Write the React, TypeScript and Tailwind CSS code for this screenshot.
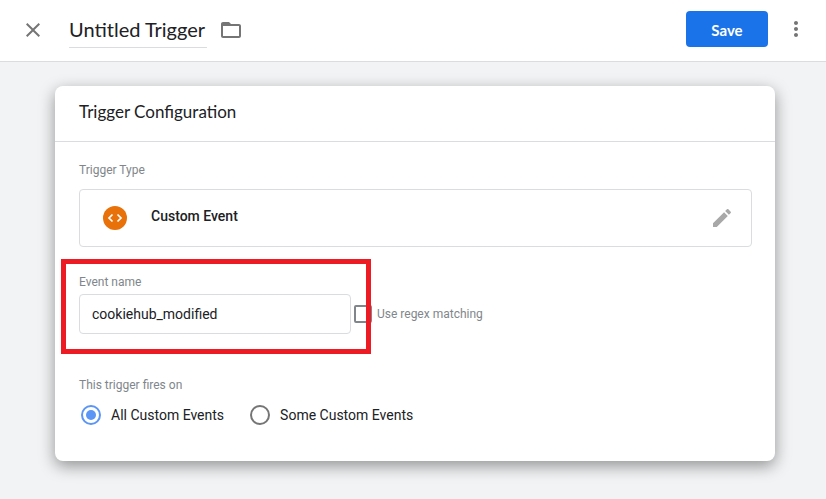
import { useState } from "react";

const FIRE_OPTIONS = [
  { value: "all", label: "All Custom Events" },
  { value: "some", label: "Some Custom Events" },
];

function Header() {
  const [name, setName] = useState("Untitled Trigger");

  return (
    <header className="flex items-center justify-between h-[62px] pb-[2px] pl-[21px] pr-[18px] bg-white border-b border-[#dadce0]">
      <div className="flex items-center">
        <button type="button" aria-label="Close" className="text-[#757575]">
          <svg width="24" height="24" viewBox="0 0 24 24" fill="currentColor">
            <path d="M19 6.4L17.6 5 12 10.6 6.4 5 5 6.4 10.6 12 5 17.6 6.400 19 12 13.4 17.6 19 19 17.6 13.4 12z" />
          </svg>
        </button>
        <input
          type="text"
          aria-label="Trigger name"
          value={name}
          onChange={(e) => setName(e.target.value)}
          className="ml-6 mt-1 w-[138px] h-8 pb-1 border-b border-[#dadce0] outline-none text-xl text-[#202124] font-['Lato',sans-serif]"
        />
        <button type="button" aria-label="Move to folder" className="ml-3 text-[#757575]">
          <svg width="24" height="24" viewBox="0 0 24 24" fill="currentColor">
            <path d="M20 6h-8l-2-2H4c-1.1 0-2 .9-2 2v12c0 1.1.9 2 2 2h16c1.1 0 2-.9 2-2V8c0-1.1-.9-2-2-2zm0 12H4V8h16v10z" />
          </svg>
        </button>
      </div>
      <div className="flex items-center gap-4 pb-[2px]">
        <button
          type="button"
          className="w-[82px] h-9 pt-[2px] rounded bg-[#1a73e8] text-white text-[15px] leading-5 font-bold font-['Lato',sans-serif]"
        >
          Save
        </button>
        <button type="button" aria-label="More actions" className="text-[#757575]">
          <svg width="24" height="24" viewBox="0 0 24 24" fill="currentColor">
            <path d="M12 8c1.1 0 2-.9 2-2s-.9-2-2-2-2 .9-2 2 .9 2 2 2zm0 2c-1.1 0-2 .9-2 2s.9 2 2 2 2-.9 2-2-.9-2-2-2zm0 6c-1.1 0-2 .9-2 2s.9 2 2 2 2-.9 2-2-.9-2-2-2z" />
          </svg>
        </button>
      </div>
    </header>
  );
}

function TriggerType() {
  return (
    <section>
      <h3 className="text-xs text-[#80868b]">Trigger Type</h3>
      <div className="mt-[11px] flex items-center h-[58px] px-[23px] pr-[17px] border border-[#dadce0] rounded">
        <svg width="24" height="24" viewBox="0 0 24 24">
          <circle cx="12" cy="12" r="12" fill="#e8710a" />
          <path d="M9.500 8.500L6 12l3.500 3.500M14.500 8.500L18 12l-3.500 3.500" fill="none" stroke="#fff" strokeWidth="1.700" />
        </svg>
        <span className="ml-6 mb-1 text-sm font-medium text-[#202124]">Custom Event</span>
        <button type="button" aria-label="Edit trigger type" className="ml-auto text-[#a8a8a8]">
          <svg width="24" height="24" viewBox="0 0 24 24" fill="currentColor">
            <path d="M3 17.250V21h3.750L17.810 9.940l-3.750-3.750L3 17.250zM20.710 7.040c.39-.39.39-1.020 0-1.410l-2.340-2.340c-.39-.39-1.020-.39-1.410 0l-1.830 1.830 3.750 3.750 1.830-1.830z" />
          </svg>
        </button>
      </div>
    </section>
  );
}

function EventName() {
  const [eventName, setEventName] = useState("cookiehub_modified");
  const [regex, setRegex] = useState(false);

  return (
    <section className="relative mt-[27px]">
      <label htmlFor="event-name" className="block text-xs text-[#80868b]">
        Event name
      </label>
      <div className="mt-1 flex items-center">
        <input
          id="event-name"
          type="text"
          value={eventName}
          onChange={(e) => setEventName(e.target.value)}
          className="w-[272px] h-10 px-3 border border-[#dadce0] rounded outline-none text-sm text-[#202124]"
        />
        <label className="ml-[3px] flex items-center gap-[5px] text-xs text-[#80868b]">
          <input
            type="checkbox"
            checked={regex}
            onChange={(e) => setRegex(e.target.checked)}
            className="appearance-none w-[18px] h-[18px] border-2 border-[#80868b] rounded-xs checked:bg-[#1a73e8]"
          />
          Use regex matching
        </label>
      </div>
      {/* highlight around the event name field */}
      <div className="pointer-events-none absolute -left-[18px] -top-[15px] w-[310px] h-[95px] border-5 border-[#ed1c24]" />
    </section>
  );
}

function FiresOn() {
  const [firesOn, setFiresOn] = useState("all");

  return (
    <fieldset className="mt-[43px]">
      <legend className="text-xs text-[#80868b]">This trigger fires on</legend>
      <div className="mt-3 pl-[2px] flex gap-[26px]">
        {FIRE_OPTIONS.map((option) => (
          <label key={option.value} className="flex items-center gap-[10px] text-sm text-[#202124]">
            <input
              type="radio"
              name="fires-on"
              value={option.value}
              checked={firesOn === option.value}
              onChange={() => setFiresOn(option.value)}
              className="appearance-none w-5 h-5 rounded-full border-2 border-[#757575] checked:border-[#5b95f5] checked:bg-[#5b95f5] checked:bg-clip-content checked:p-[3px]"
            />
            {option.label}
          </label>
        ))}
      </div>
    </fieldset>
  );
}

export default function App() {
  return (
    <div className="min-h-screen bg-[#f1f3f4] font-['Roboto',sans-serif]">
      <Header />
      <main className="pt-6 pb-9 pl-[55px] pr-[51px]">
        <div className="rounded-lg bg-white shadow-[0_5px_16px_rgba(0,0,0,0.4)]">
          <h2 className="flex items-center h-14 px-6 pb-[3px] border-b border-[#dadce0] text-[17px] leading-6 text-[#202124] font-['Lato',sans-serif]">
            Trigger Configuration
          </h2>
          <div className="pt-5 pb-9 pl-6 pr-[23px]">
            <TriggerType />
            <EventName />
            <FiresOn />
          </div>
        </div>
      </main>
    </div>
  );
}
